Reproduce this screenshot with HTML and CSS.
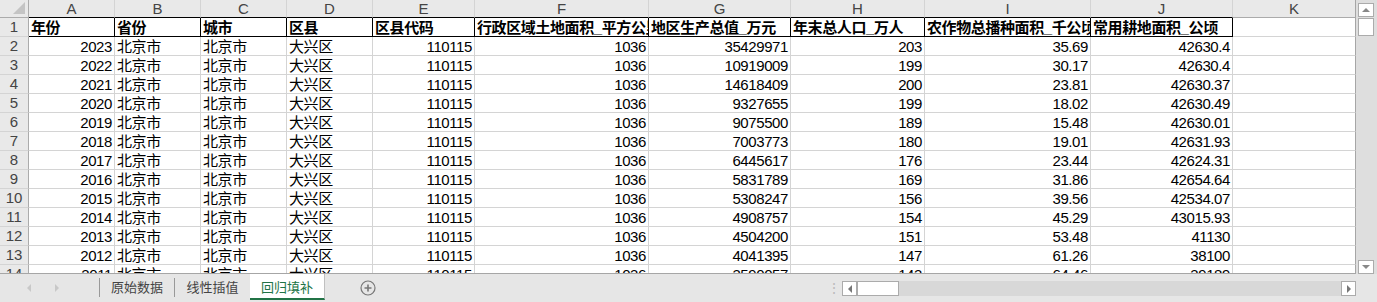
FILE: index.html
```html
<!DOCTYPE html>
<html lang="zh-CN">
<head>
  <meta charset="UTF-8">
  <meta name="viewport" content="width=device-width, initial-scale=1.0">
  <title>回归填补</title>
  <link rel="stylesheet" href="styles.css">
</head>
<body>

<div class="book">
  <div class="main">
    <div class="grid">
      <!-- 列标题 -->
      <div class="corner"></div>
      <div class="col-head">A</div><div class="col-head">B</div><div class="col-head">C</div><div class="col-head">D</div><div class="col-head">E</div><div class="col-head">F</div><div class="col-head">G</div><div class="col-head">H</div><div class="col-head">I</div><div class="col-head">J</div><div class="col-head last">K</div>

      <!-- 表头行 -->
      <div class="row-head">1</div>
      <div class="cell hdr">年份</div><div class="cell hdr">省份</div><div class="cell hdr">城市</div><div class="cell hdr">区县</div><div class="cell hdr">区县代码</div><div class="cell hdr">行政区域土地面积_平方公里</div><div class="cell hdr">地区生产总值_万元</div><div class="cell hdr">年末总人口_万人</div><div class="cell hdr">农作物总播种面积_千公顷</div><div class="cell hdr">常用耕地面积_公顷</div><div class="cell"></div>

      <div class="row-head">2</div>
      <div class="cell num">2023</div><div class="cell">北京市</div><div class="cell">北京市</div><div class="cell">大兴区</div><div class="cell num">110115</div><div class="cell num">1036</div><div class="cell num">35429971</div><div class="cell num">203</div><div class="cell num">35.69</div><div class="cell num">42630.4</div><div class="cell"></div>

      <div class="row-head">3</div>
      <div class="cell num">2022</div><div class="cell">北京市</div><div class="cell">北京市</div><div class="cell">大兴区</div><div class="cell num">110115</div><div class="cell num">1036</div><div class="cell num">10919009</div><div class="cell num">199</div><div class="cell num">30.17</div><div class="cell num">42630.4</div><div class="cell"></div>

      <div class="row-head">4</div>
      <div class="cell num">2021</div><div class="cell">北京市</div><div class="cell">北京市</div><div class="cell">大兴区</div><div class="cell num">110115</div><div class="cell num">1036</div><div class="cell num">14618409</div><div class="cell num">200</div><div class="cell num">23.81</div><div class="cell num">42630.37</div><div class="cell"></div>

      <div class="row-head">5</div>
      <div class="cell num">2020</div><div class="cell">北京市</div><div class="cell">北京市</div><div class="cell">大兴区</div><div class="cell num">110115</div><div class="cell num">1036</div><div class="cell num">9327655</div><div class="cell num">199</div><div class="cell num">18.02</div><div class="cell num">42630.49</div><div class="cell"></div>

      <div class="row-head">6</div>
      <div class="cell num">2019</div><div class="cell">北京市</div><div class="cell">北京市</div><div class="cell">大兴区</div><div class="cell num">110115</div><div class="cell num">1036</div><div class="cell num">9075500</div><div class="cell num">189</div><div class="cell num">15.48</div><div class="cell num">42630.01</div><div class="cell"></div>

      <div class="row-head">7</div>
      <div class="cell num">2018</div><div class="cell">北京市</div><div class="cell">北京市</div><div class="cell">大兴区</div><div class="cell num">110115</div><div class="cell num">1036</div><div class="cell num">7003773</div><div class="cell num">180</div><div class="cell num">19.01</div><div class="cell num">42631.93</div><div class="cell"></div>

      <div class="row-head">8</div>
      <div class="cell num">2017</div><div class="cell">北京市</div><div class="cell">北京市</div><div class="cell">大兴区</div><div class="cell num">110115</div><div class="cell num">1036</div><div class="cell num">6445617</div><div class="cell num">176</div><div class="cell num">23.44</div><div class="cell num">42624.31</div><div class="cell"></div>

      <div class="row-head">9</div>
      <div class="cell num">2016</div><div class="cell">北京市</div><div class="cell">北京市</div><div class="cell">大兴区</div><div class="cell num">110115</div><div class="cell num">1036</div><div class="cell num">5831789</div><div class="cell num">169</div><div class="cell num">31.86</div><div class="cell num">42654.64</div><div class="cell"></div>

      <div class="row-head">10</div>
      <div class="cell num">2015</div><div class="cell">北京市</div><div class="cell">北京市</div><div class="cell">大兴区</div><div class="cell num">110115</div><div class="cell num">1036</div><div class="cell num">5308247</div><div class="cell num">156</div><div class="cell num">39.56</div><div class="cell num">42534.07</div><div class="cell"></div>

      <div class="row-head">11</div>
      <div class="cell num">2014</div><div class="cell">北京市</div><div class="cell">北京市</div><div class="cell">大兴区</div><div class="cell num">110115</div><div class="cell num">1036</div><div class="cell num">4908757</div><div class="cell num">154</div><div class="cell num">45.29</div><div class="cell num">43015.93</div><div class="cell"></div>

      <div class="row-head">12</div>
      <div class="cell num">2013</div><div class="cell">北京市</div><div class="cell">北京市</div><div class="cell">大兴区</div><div class="cell num">110115</div><div class="cell num">1036</div><div class="cell num">4504200</div><div class="cell num">151</div><div class="cell num">53.48</div><div class="cell num">41130</div><div class="cell"></div>

      <div class="row-head">13</div>
      <div class="cell num">2012</div><div class="cell">北京市</div><div class="cell">北京市</div><div class="cell">大兴区</div><div class="cell num">110115</div><div class="cell num">1036</div><div class="cell num">4041395</div><div class="cell num">147</div><div class="cell num">61.26</div><div class="cell num">38100</div><div class="cell"></div>

      <div class="row-head">14</div>
      <div class="cell num">2011</div><div class="cell">北京市</div><div class="cell">北京市</div><div class="cell">大兴区</div><div class="cell num">110115</div><div class="cell num">1036</div><div class="cell num">3590057</div><div class="cell num">143</div><div class="cell num">64.46</div><div class="cell num">39189</div><div class="cell"></div>
    </div>

    <!-- 垂直滚动条 -->
    <div class="vscroll">
      <div class="sb-btn"><span class="tri-up"></span></div>
      <div class="sb-thumb"></div>
      <div class="vtrack"></div>
      <div class="sb-btn"><span class="tri-down"></span></div>
    </div>
  </div>

  <!-- 工作表标签栏 -->
  <div class="tabbar">
    <div class="tab-nav">
      <span class="tri-left faint"></span>
      <span class="tri-right faint"></span>
    </div>
    <div class="tab">原始数据</div>
    <div class="tab">线性插值</div>
    <div class="tab active">回归填补</div>
    <div class="add-sheet">
      <svg width="16" height="16" viewBox="0 0 16 16">
        <circle cx="8" cy="8" r="7" fill="none" stroke="#777" stroke-width="1.2"/>
        <path d="M8 4.5v7M4.5 8h7" stroke="#777" stroke-width="1.6"/>
      </svg>
    </div>
    <div class="dots">⋮</div>
    <div class="hscroll">
      <div class="sb-btn"><span class="tri-left"></span></div>
      <div class="sb-thumb"></div>
      <div class="htrack"></div>
      <div class="sb-btn"><span class="tri-right"></span></div>
    </div>
  </div>
</div>

</body>
</html>
```

FILE: styles.css
```css
body {
  margin: 0;
  background-color: #e6e6e6;
  font-family: "Liberation Sans", "Noto Sans CJK SC", sans-serif;
  overflow: hidden;
}

.book {
  width: 1377px;
  height: 302px;
  display: flex;
  flex-direction: column;
}

.main {
  display: flex;
  height: 274px;
}

.grid {
  width: 1356px;
  height: 274px;
  box-sizing: border-box;
  border-bottom: 1px solid #a6a6a6;
  background-color: white;
  overflow: hidden;
  display: grid;
  grid-template-columns: 29px 86px 86px 86px 86px 102px 174px 142px 134px 166px 142px 123px;
  grid-template-rows: 18px;
  grid-auto-rows: 19px;
}

.grid > div {
  box-sizing: border-box;
  border-right: 1px solid #d4d4d4;
  border-bottom: 1px solid #d4d4d4;
  white-space: nowrap;
  overflow: hidden;
  font-size: 15px;
  line-height: 18px;
  letter-spacing: -0.4px;
}

.grid > div:nth-child(12n) {
  border-right-color: #a6a6a6;
}

.corner {
  background-color: #e9e9e9;
  position: relative;
  border-bottom-color: #ababab !important;
  border-right-color: #ababab !important;
}

/* 左上角的小三角 */
.corner::after {
  content: "";
  position: absolute;
  right: 3px;
  bottom: 3px;
  border-left: 12px solid transparent;
  border-bottom: 12px solid #c4c4c4;
}

.col-head {
  background-color: #e9e9e9;
  color: #444;
  text-align: center;
  border-bottom-color: #ababab !important;
  line-height: 17px !important;
  letter-spacing: 0 !important;
}

.row-head {
  background-color: #e9e9e9;
  color: #444;
  text-align: center;
  border-right-color: #ababab !important;
  letter-spacing: 0 !important;
}

.cell {
  color: #000;
  padding: 1px 2px 0 2px;
}

.num {
  text-align: right;
}

.hdr {
  font-weight: bold;
  border-right-color: #000 !important;
  border-bottom-color: #000 !important;
}

.grid > .col-head:nth-child(-n+11) {
  border-bottom-color: #000 !important;
}

.vscroll {
  width: 21px;
  background-color: #dedede;
  display: flex;
  flex-direction: column;
  align-items: flex-end;
  padding: 3px 3px 0 0;
  box-sizing: border-box;
}

.vtrack {
  flex: 1;
}

.sb-btn {
  width: 16px;
  height: 14px;
  box-sizing: border-box;
  background-color: white;
  border: 1px solid #ababab;
  display: flex;
  align-items: center;
  justify-content: center;
}

.sb-thumb {
  width: 16px;
  height: 18px;
  box-sizing: border-box;
  background-color: white;
  border: 1px solid #ababab;
  margin-top: 1px;
}

.tri-up {
  border-left: 4px solid transparent;
  border-right: 4px solid transparent;
  border-bottom: 4px solid #888;
}

.tri-down {
  border-left: 4px solid transparent;
  border-right: 4px solid transparent;
  border-top: 4px solid #888;
}

.tri-left {
  border-top: 4px solid transparent;
  border-bottom: 4px solid transparent;
  border-right: 4px solid #777;
}

.tri-right {
  border-top: 4px solid transparent;
  border-bottom: 4px solid transparent;
  border-left: 4px solid #777;
}

.tri-left.faint {
  border-right-color: #c8c8c8;
}

.tri-right.faint {
  border-left-color: #c8c8c8;
}

.tabbar {
  height: 28px;
  display: flex;
  align-items: stretch;
  background-color: #e6e6e6;
}

.tab-nav {
  width: 100px;
  display: flex;
  align-items: center;
  gap: 24px;
  padding-left: 27px;
  box-sizing: border-box;
  border-right: 1px solid #999;
  margin: 4px 0 5px 0;
}

.tab {
  width: 75px;
  font-size: 13px;
  color: #444;
  text-align: center;
  margin: 4px 0 5px 0;
  border-right: 1px solid #999;
  box-sizing: border-box;
  line-height: 20px;
}

.tab.active {
  margin: 0 0 2px 0;
  padding-top: 4px;
  background-color: white;
  color: #217346;
  border-right: 1px solid #c0c0c0;
  border-bottom: 2px solid #217346;
}

.tab:nth-child(3) {
  border-right: none;
}

.add-sheet {
  width: 84px;
  display: flex;
  align-items: center;
  justify-content: center;
  padding-bottom: 1px;
  margin-left: 1px;
}

.dots {
  margin-left: auto;
  width: 16px;
  color: #bbb;
  font-size: 14px;
  line-height: 28px;
  text-align: center;
}

.hscroll {
  width: 514px;
  display: flex;
  align-items: flex-start;
  padding-top: 7px;
  margin-left: 0;
  margin-right: 21px;
}

.hscroll .sb-btn {
  width: 15px;
  height: 15px;
}

.hscroll .sb-thumb {
  width: 42px;
  height: 15px;
  margin-top: 0;
}

.htrack {
  flex: 1;
  height: 15px;
  background-color: #d8d8d8;
}
```
